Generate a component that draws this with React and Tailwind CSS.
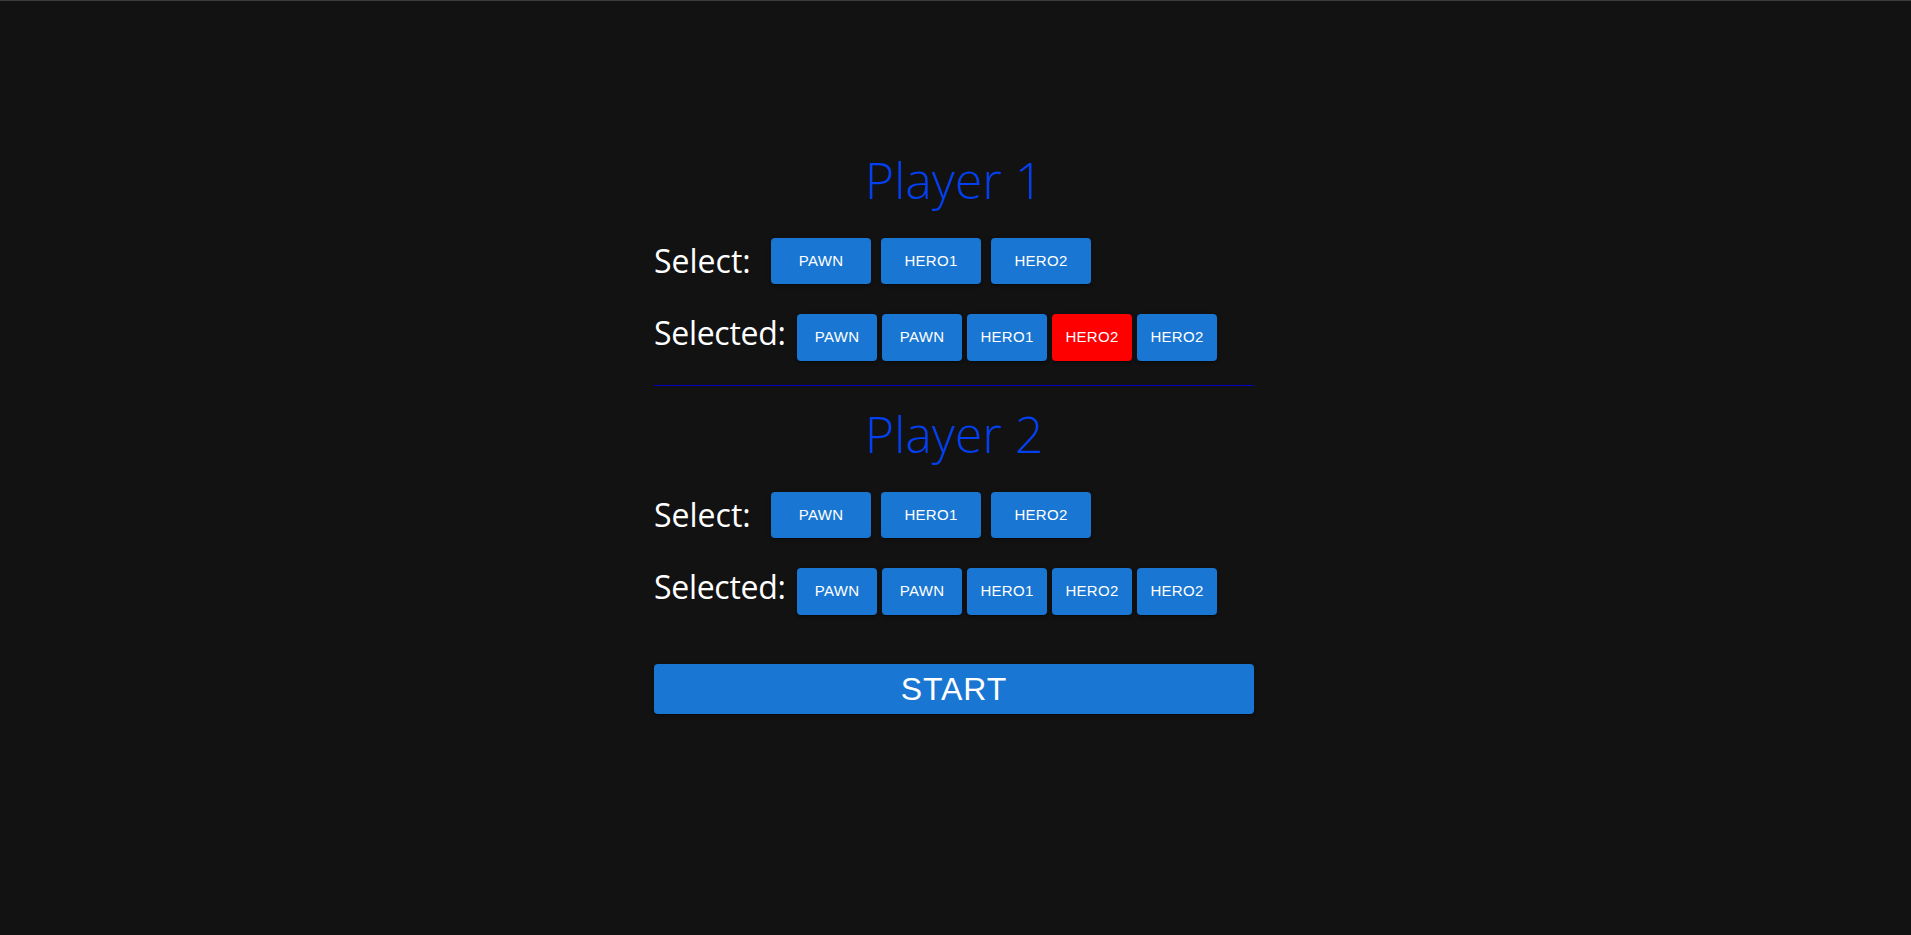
import React from "react";

const btnFont = { fontFamily: '"Liberation Sans", Arial, sans-serif' };

function SmallBtn({ label, red, wide }) {
  return (
    <button
      className={
        (wide ? "w-[100px] h-[46px] " : "w-[80px] h-[47px] ") +
        (red ? "bg-[#ff0000] " : "bg-[#1976d2] ") +
        "rounded-[4px] text-white text-[15px] tracking-[0.3px] uppercase flex items-center justify-center shadow-[0_3px_1px_-2px_rgba(0,0,0,0.2),0_2px_2px_0_rgba(0,0,0,0.14),0_1px_5px_0_rgba(0,0,0,0.12)]"
      }
      style={btnFont}
    >
      {label}
    </button>
  );
}

function Player({ name, selected }) {
  return (
    <div className="flex flex-col">
      <h2 className="h-[60px] leading-[60px] text-center text-[50px] font-light text-[#0440f0]">
        {name}
      </h2>
      <div className="mt-[28px] flex items-center">
        <span className="w-[117px] text-[32px] leading-[32px] text-white">Select:</span>
        <div className="flex gap-[10px]">
          <SmallBtn label="PAWN" wide />
          <SmallBtn label="HERO1" wide />
          <SmallBtn label="HERO2" wide />
        </div>
      </div>
      <div className="mt-[30px] flex items-center">
        <span className="w-[143px] mb-[9px] text-[32px] leading-[32px] text-white tracking-[-0.3px]">Selected:</span>
        <div className="flex gap-[5px]">
          {selected.map((s, i) => (
            <SmallBtn key={i} label={s.label} red={s.red} />
          ))}
        </div>
      </div>
    </div>
  );
}

export default function App() {
  return (
    <div
      className="min-h-[935px] w-full bg-[#121212] border-t border-[#3c3c3c] pr-[3px]"
      style={{ fontFamily: '"Open Sans", "Noto Sans", sans-serif' }}
    >
      <div className="mx-auto w-[600px] pt-[149px] flex flex-col">
        <Player
          name="Player 1"
          selected={[
            { label: "PAWN" },
            { label: "PAWN" },
            { label: "HERO1" },
            { label: "HERO2", red: true },
            { label: "HERO2" },
          ]}
        />
        <div className="mt-[24px] h-px bg-[#0000c8]" />
        <div className="mt-[18px]">
          <Player
            name="Player 2"
            selected={[
              { label: "PAWN" },
              { label: "PAWN" },
              { label: "HERO1" },
              { label: "HERO2" },
              { label: "HERO2" },
            ]}
          />
        </div>
        <button
          className="mt-[49px] h-[50px] w-full rounded-[4px] bg-[#1976d2] text-white text-[32px] tracking-[0.9px] uppercase flex items-center justify-center shadow-[0_3px_1px_-2px_rgba(0,0,0,0.2),0_2px_2px_0_rgba(0,0,0,0.14),0_1px_5px_0_rgba(0,0,0,0.12)]"
          style={btnFont}
        >
          START
        </button>
      </div>
    </div>
  );
}
